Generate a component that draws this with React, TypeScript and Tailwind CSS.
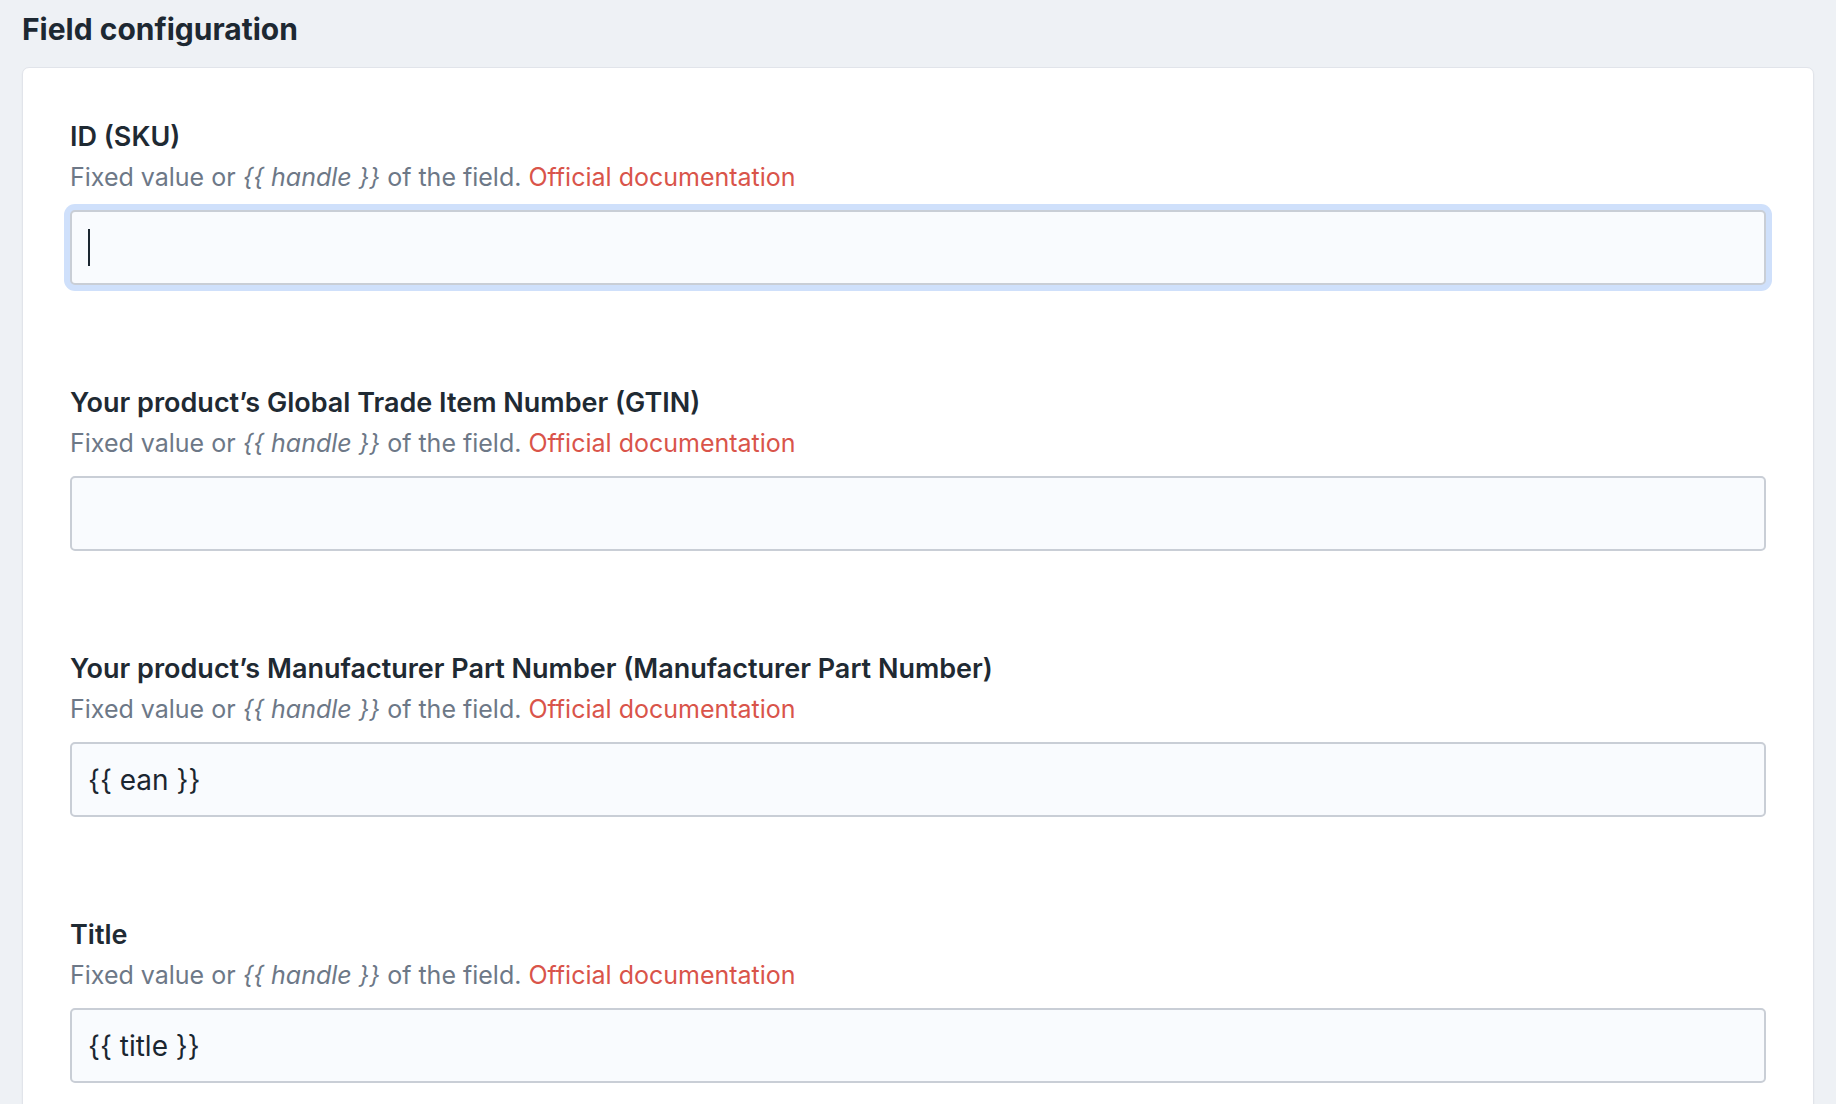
import { FC } from 'react';

interface FieldProps {
    label: string;
    value?: string;
    focused?: boolean;
}

const Field: FC<FieldProps> = ({ label, value, focused }) => {
    return (
        <div className="mb-[102px]">
            <div className="text-[27px] leading-[32px] font-semibold text-[#1f2a33]">{label}</div>
            <div className="mt-[8px] text-[25px] leading-[32px] text-[#6d7887]">
                Fixed value or <span className="italic">{'{{ handle }}'}</span> of the field.{' '}
                <span className="text-[#d9544a]">Official documentation</span>
            </div>
            {/* Input */}
            <div
                className={`mt-[17px] h-[75px] rounded-[5px] border-2 border-[#c9ced6] bg-[#f9fbfe] flex items-center pl-[16px] text-[28px] text-[#1b2630] ${
                    focused ? 'ring-[6px] ring-[#cfe0fb]' : ''
                }`}
            >
                {focused ? (
                    <span className="block w-[2px] h-[37px] bg-[#1b2630]" />
                ) : (
                    value
                )}
            </div>
        </div>
    );
};

export default function App() {
    return (
        <div
            className="min-h-screen bg-[#eef1f5] px-[22px] pt-[9px] overflow-hidden"
            style={{ fontFamily: 'Inter, "Noto Sans", sans-serif' }}
        >
            <h1 className="text-[30px] leading-[40px] font-bold text-[#1d2832] mb-[18px]">Field configuration</h1>
            <div className="bg-white rounded-[7px] border border-[#e1e4ea] shadow-[0_1px_2px_rgba(0,0,0,0.05)] px-[47px] pt-[53px]">
                <Field label="ID (SKU)" focused />
                <Field label="Your product’s Global Trade Item Number (GTIN)" />
                <Field label="Your product’s Manufacturer Part Number (Manufacturer Part Number)" value="{{ ean }}" />
                <Field label="Title" value="{{ title }}" />
            </div>
        </div>
    );
}
